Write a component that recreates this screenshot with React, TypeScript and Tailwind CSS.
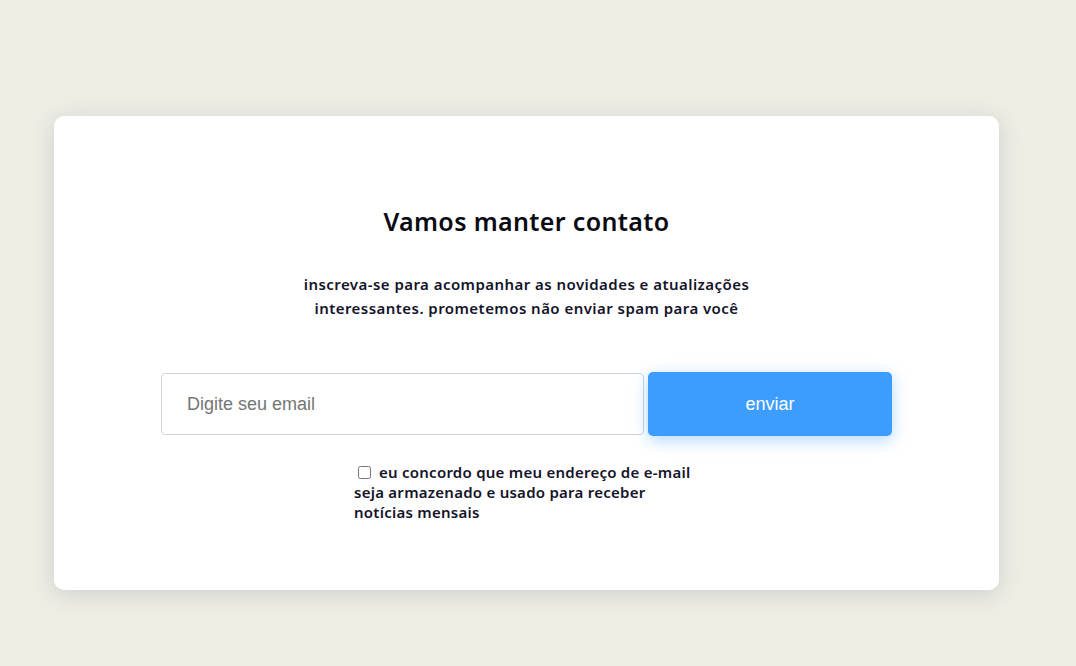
import { useState } from "react";

const App = () => {
  const [email, setEmail] = useState("");
  const [agree, setAgree] = useState(false);

  return (
    <div className="min-h-screen w-full bg-[#f0ede3] pt-[116px]" style={{ fontFamily: "'Noto Sans', Lato, sans-serif" }}>
      <div className="ml-[54px] w-[945px] rounded-[10px] bg-white pb-[68px] pt-[89px] shadow-[0_4px_22px_rgba(140,168,180,0.4)]">
        <h1 className="text-center text-[25px] font-semibold leading-[32px] tracking-[0.35px] text-[#0a0a12]">Vamos manter contato</h1>

        <p className="mx-auto mt-[35px] w-[480px] text-center text-[15px] font-semibold leading-[24px] tracking-[0.45px] text-[#14142a]">
          inscreva-se para acompanhar as novidades e atualizações interessantes. prometemos não enviar spam para você
        </p>

        <form
          className="mx-auto mt-[52px] flex w-[731px] items-center gap-[4px]"
          onSubmit={(e) => e.preventDefault()}
        >
          <input
            type="email"
            value={email}
            onChange={(e) => setEmail(e.target.value)}
            placeholder="Digite seu email"
            className="h-[62px] w-[483px] rounded-[4px] border border-[#cfd4da] bg-white pl-[25px] text-[18px] text-[#333] outline-none placeholder:text-[#757575]"
            style={{ fontFamily: "'Liberation Sans', Arial, sans-serif" }}
          />
          <button
            type="submit"
            className="h-[64px] w-[244px] rounded-[5px] bg-[#3d9dff] text-[18px] text-white shadow-[0_4px_16px_rgba(61,157,255,0.4)]"
            style={{ fontFamily: "'Liberation Sans', Arial, sans-serif" }}
          >
            enviar
          </button>
        </form>

        <label className="ml-[300px] mt-[26px] block w-[380px] text-left text-[15px] font-semibold leading-[20px] tracking-[0.25px] text-[#14142a]">
          <input
            type="checkbox"
            checked={agree}
            onChange={(e) => setAgree(e.target.checked)}
            className="ml-[4px] mr-[8px] inline-block h-[13px] w-[13px] align-[-1px]"
          />
          eu concordo que meu endereço de e-mail
          <br />
          seja armazenado e usado para receber
          <br />
          notícias mensais
        </label>
      </div>
    </div>
  );
};

export default App;
